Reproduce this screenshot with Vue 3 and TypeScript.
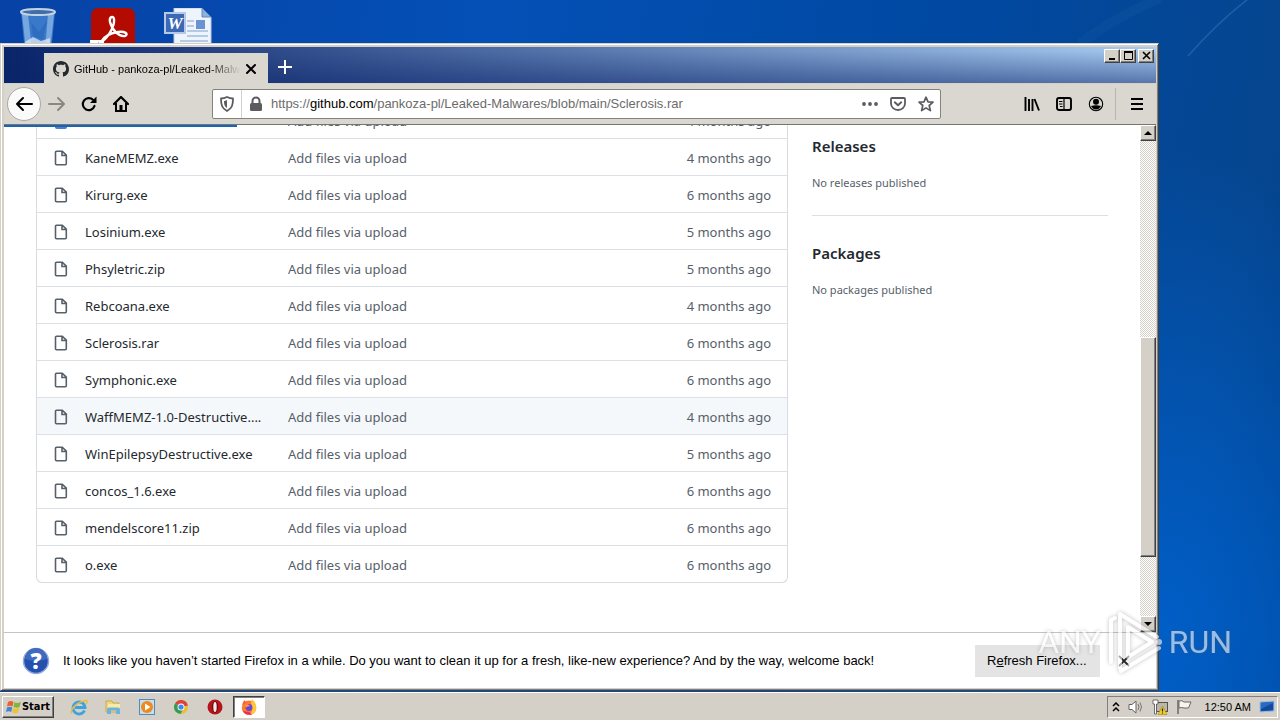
<script setup lang="ts">
interface FileRow {
  name: string
  age: string
  active?: boolean
}

const message = 'Add files via upload'

const files: FileRow[] = [
  { name: 'KaneMEMZ.exe', age: '4 months ago' },
  { name: 'Kirurg.exe', age: '6 months ago' },
  { name: 'Losinium.exe', age: '5 months ago' },
  { name: 'Phsyletric.zip', age: '5 months ago' },
  { name: 'Rebcoana.exe', age: '4 months ago' },
  { name: 'Sclerosis.rar', age: '6 months ago' },
  { name: 'Symphonic.exe', age: '6 months ago' },
  { name: 'WaffMEMZ-1.0-Destructive....', age: '4 months ago', active: true },
  { name: 'WinEpilepsyDestructive.exe', age: '5 months ago' },
  { name: 'concos_1.6.exe', age: '6 months ago' },
  { name: 'mendelscore11.zip', age: '6 months ago' },
  { name: 'o.exe', age: '6 months ago' }
]
</script>

<template>
  <div class="screen">
    <div class="desktop">
      <svg class="streaks" viewBox="0 0 320 180" aria-hidden="true">
        <path d="M288 -1 Q256 24 228 56" fill="none" stroke="#4f8fc4" stroke-opacity=".35" stroke-width="1.5" />
        <path d="M200 -2 Q150 20 120 44" fill="none" stroke="#4f8fc4" stroke-opacity=".08" stroke-width="10" />
      </svg>
      <div class="shortcuts">
        <div class="shortcut">
          <svg width="38" height="48" viewBox="0 0 38 48" aria-label="Recycle Bin">
            <path d="M2 4 L6 44 H32 L36 4 Z" fill="#4c8bd6" fill-opacity=".75" />
            <path d="M3 6 L7 42 H13 L9 6 Z M29 6 L26 42 H31 L35 6Z" fill="#a9cdf0" fill-opacity=".55" />
            <path d="M12 14 L20 24 L28 12 L24 32 L14 28 Z" fill="#1f5db0" fill-opacity=".4" />
            <path d="M6 34 L14 29 L22 33 L31 30 L31 44 H8 Z" fill="#d7e5f2" fill-opacity=".8" />
            <ellipse cx="19" cy="4" rx="17" ry="3" fill="#3f6ea8" stroke="#c3d3e2" stroke-width="2" />
          </svg>
        </div>
        <div class="shortcut">
          <svg width="46" height="48" viewBox="0 0 46 48" aria-label="Acrobat Reader">
            <rect x="1" y="0" width="44" height="46" rx="7" fill="#b30b00" />
            <path d="M11 34 C17 31 25 19 24 11 C23 7 19 9 20 14 C22 22 29 29 35 28 C39 26 35 23 28 24 C21 25 14 28 11 34 Z" fill="none" stroke="#fff" stroke-width="2.4" stroke-linejoin="round" />
            <rect x="0" y="32" width="14" height="14" fill="#fff" />
            <path d="M2 45 V38 H8 V34 L13 40 Z" fill="#1b5aa8" />
          </svg>
        </div>
        <div class="shortcut">
          <svg width="48" height="48" viewBox="0 0 48 48" aria-label="Word document">
            <path d="M10 0 H38 L47 9 V48 H10 Z" fill="#eef4fb" stroke="#b9cbe2" />
            <path d="M38 0 V9 H47 Z" fill="#8fb0db" stroke="#6388bd" />
            <path d="M23 13 H30 M23 18 H30 M23 23 H44 M23 28 H44 M16 33 H44" stroke="#7fa0cf" stroke-width="1" />
            <rect x="32" y="12" width="9" height="9" fill="#6a93cf" />
            <rect x="1" y="5" width="20" height="20" fill="#3c68b5" stroke="#b4c8e8" stroke-width="2" />
            <text x="11" y="21" text-anchor="middle" font-family="Liberation Serif, serif" font-weight="700" font-style="italic" font-size="17" fill="#fff">W</text>
          </svg>
        </div>
      </div>

      <div class="window">
        <header class="titlebar">
          <div class="tab">
            <svg width="16" height="16" viewBox="0 0 16 16" aria-hidden="true">
              <path fill="#24292e" d="M8 0C3.58 0 0 3.58 0 8c0 3.54 2.29 6.53 5.47 7.59.4.07.55-.17.55-.38 0-.19-.01-.82-.01-1.49-2.01.37-2.53-.49-2.69-.94-.09-.23-.48-.94-.82-1.13-.28-.15-.68-.52-.01-.53.63-.01 1.08.58 1.23.82.72 1.21 1.87.87 2.33.66.07-.52.28-.87.51-1.07-1.78-.2-3.64-.89-3.64-3.95 0-.87.31-1.59.82-2.15-.08-.2-.36-1.02.08-2.12 0 0 .67-.21 2.2.82.64-.18 1.32-.27 2-.27s1.36.09 2 .27c1.53-1.04 2.2-.82 2.2-.82.44 1.1.16 1.92.08 2.12.51.56.82 1.27.82 2.15 0 3.07-1.87 3.75-3.65 3.95.29.25.54.73.54 1.48 0 1.07-.01 1.93-.01 2.2 0 .21.15.46.55.38A8.01 8.01 0 0016 8c0-4.42-3.58-8-8-8z" />
            </svg>
            <span class="tab-title">GitHub - pankoza-pl/Leaked-Malwares</span>
            <button class="plain tab-close" aria-label="Close tab">
              <svg width="12" height="12" viewBox="0 0 12 12"><path d="M2 2 L10 10 M10 2 L2 10" stroke="#000" stroke-width="2" stroke-linecap="round" /></svg>
            </button>
          </div>
          <button class="plain new-tab" aria-label="New tab">
            <svg width="14" height="14" viewBox="0 0 14 14"><path d="M7 0 V14 M0 7 H14" stroke="#fff" stroke-width="2" /></svg>
          </button>
          <div class="captions">
            <button class="classic caption" aria-label="Minimize"><svg width="11" height="10" viewBox="0 0 11 10"><path d="M2 8 H8" stroke="#000" stroke-width="2" /></svg></button>
            <button class="classic caption" aria-label="Maximize"><svg width="11" height="10" viewBox="0 0 11 10"><path d="M1.500 1 V8.500 H9.500 V1" fill="none" stroke="#000" /><path d="M1 1 H10" stroke="#000" stroke-width="2" /></svg></button>
            <button class="classic caption close" aria-label="Close"><svg width="11" height="10" viewBox="0 0 11 10"><path d="M2 1 L9 8 M9 1 L2 8" stroke="#000" stroke-width="1.600" /></svg></button>
          </div>
        </header>

        <nav class="toolbar">
          <button class="plain back" aria-label="Back">
            <svg width="18" height="16" viewBox="0 0 18 16"><path d="M17 8 H2 M8 2 L2 8 L8 14" fill="none" stroke="#000" stroke-width="2" stroke-linecap="round" stroke-linejoin="round" /></svg>
          </button>
          <button class="plain tool" aria-label="Forward">
            <svg width="18" height="16" viewBox="0 0 18 16"><path d="M1 8 H16 M10 2 L16 8 L10 14" fill="none" stroke="#8a8884" stroke-width="2" stroke-linecap="round" stroke-linejoin="round" /></svg>
          </button>
          <button class="plain tool" aria-label="Reload">
            <svg width="16" height="16" viewBox="0 0 16 16"><path d="M13.500 10 A6 6 0 1 1 12 3.800" fill="none" stroke="#000" stroke-width="2.200" stroke-linecap="round" /><path d="M15.500 0.500 V7 H9 Z" fill="#000" /></svg>
          </button>
          <button class="plain tool" aria-label="Home">
            <svg width="16" height="16" viewBox="0 0 16 16"><path d="M1 8 L8 1 L15 8" fill="none" stroke="#000" stroke-width="2.200" stroke-linecap="round" stroke-linejoin="round" /><path d="M3 7 V15 H13 V7" fill="none" stroke="#000" stroke-width="2" /><path d="M6.500 9 H9.500 V15 H6.500 Z" fill="#000" /></svg>
          </button>
          <div class="spacer"></div>
          <div class="urlbar">
            <button class="plain shield" aria-label="Tracking protection">
              <svg width="14" height="16" viewBox="0 0 14 16"><path d="M7 1 Q10 2.500 13 2.500 C13 9 12 12.500 7 15 C2 12.500 1 9 1 2.500 Q4 2.500 7 1 Z" fill="none" stroke="#5b5b60" stroke-width="1.800" stroke-linejoin="round" /><path d="M7 4 V12 C4.500 10.500 4 8.500 4 5 Q5.500 5 7 4 Z" fill="#5b5b60" /></svg>
            </button>
            <svg class="lock" width="14" height="16" viewBox="0 0 14 16" aria-hidden="true"><rect x="1" y="7" width="12" height="8" rx="1.500" fill="#5b5b60" /><path d="M3.500 8 V5 A3.500 3.500 0 0 1 10.500 5 V8" fill="none" stroke="#5b5b60" stroke-width="2" /></svg>
            <div class="address" role="textbox" aria-label="Address" tabindex="0">https://<b>github.com</b>/pankoza-pl/Leaked-Malwares/blob/main/Sclerosis.rar</div>
            <button class="plain page-tool" aria-label="Page actions">
              <svg width="16" height="16" viewBox="0 0 16 16"><circle cx="2" cy="8" r="1.900" fill="#5b5b60" /><circle cx="8" cy="8" r="1.900" fill="#5b5b60" /><circle cx="14" cy="8" r="1.900" fill="#5b5b60" /></svg>
            </button>
            <button class="plain page-tool" aria-label="Save to Pocket">
              <svg width="16" height="16" viewBox="0 0 16 16"><path d="M2 2 H14 Q15 2 15 3 V7.500 A7 6.500 0 0 1 1 7.500 V3 Q1 2 2 2 Z" fill="none" stroke="#5b5b60" stroke-width="1.800" /><path d="M4.800 6.300 L8 9.300 L11.200 6.300" fill="none" stroke="#5b5b60" stroke-width="1.900" stroke-linecap="round" stroke-linejoin="round" /></svg>
            </button>
            <button class="plain page-tool" aria-label="Bookmark this page">
              <svg width="16" height="16" viewBox="0 0 16 16"><path d="M8 1.200 L10 5.800 L15 6.200 L11.200 9.500 L12.400 14.600 L8 11.900 L3.600 14.600 L4.800 9.500 L1 6.200 L6 5.800 Z" fill="none" stroke="#5b5b60" stroke-width="1.700" stroke-linejoin="round" /></svg>
            </button>
          </div>
          <div class="spacer"></div>
          <button class="plain tool" aria-label="Library">
            <svg width="16" height="16" viewBox="0 0 16 16"><path d="M1.500 1 V15 M5 3 V15 M8.500 3 V15 M10.500 3 L15 14.500" fill="none" stroke="#000" stroke-width="1.900" /></svg>
          </button>
          <button class="plain tool" aria-label="Sidebars">
            <svg width="16" height="16" viewBox="0 0 16 16"><rect x="1" y="2" width="14" height="12" rx="2" fill="none" stroke="#000" stroke-width="1.900" /><path d="M8 2 V14 M3 5.500 H6.500 M3 8 H6.500 M4 10.500 H6.500" stroke="#000" stroke-width="1.200" /></svg>
          </button>
          <button class="plain tool" aria-label="Account">
            <svg width="16" height="16" viewBox="0 0 16 16"><circle cx="8" cy="8" r="6.700" fill="none" stroke="#000" stroke-width="1.100" /><circle cx="8" cy="5.800" r="3" fill="#000" /><path d="M3 10 Q8 8.500 13 10 Q11 13.500 8 13.500 Q5 13.500 3 10 Z" fill="#000" /></svg>
          </button>
          <span class="divider"></span>
          <button class="plain tool menu" aria-label="Open menu">
            <svg width="14" height="14" viewBox="0 0 14 14"><path d="M1 2 H13 M1 7 H13 M1 12 H13" stroke="#000" stroke-width="2" /></svg>
          </button>
        </nav>

        <div class="viewport">
          <div class="load-bar"></div>
          <main class="page">
            <div class="files">
              <table>
                <colgroup><col class="c-icon"><col class="c-name"><col><col class="c-age"></colgroup>
                <tbody>
                  <tr>
                    <td class="icon"><svg width="16" height="16" viewBox="0 0 16 16"><path fill="#4a7fd0" d="M3.750 1A1.750 1.750 0 002 2.750v11.500C2 15.216 2.784 16 3.750 16h8.500A1.750 1.750 0 0014 14.250v-9.500A1.750 1.750 0 0012.250 3h-4.500l-1-1.300A1.750 1.750 0 005.300 1H3.750z" /></svg></td>
                    <td></td>
                    <td class="msg"><a href="#">{{ message }}</a></td>
                    <td class="age">4 months ago</td>
                  </tr>
                  <tr v-for="file in files" :key="file.name" :class="{ active: file.active }">
                    <td class="icon">
                      <svg width="16" height="16" viewBox="0 0 16 16" aria-hidden="true"><path d="M3.500 1.200 H9.300 L13.300 5.200 V13.800 Q13.300 14.800 12.300 14.800 H3.500 Q2.500 14.800 2.500 13.800 V2.200 Q2.500 1.200 3.500 1.200 Z M9 1.500 V5.500 H13" fill="none" stroke="#57606a" stroke-width="1.600" /></svg>
                    </td>
                    <td class="name"><a href="#">{{ file.name }}</a></td>
                    <td class="msg"><a href="#">{{ message }}</a></td>
                    <td class="age">{{ file.age }}</td>
                  </tr>
                </tbody>
              </table>
            </div>
            <aside class="about">
              <section>
                <h2>Releases</h2>
                <p>No releases published</p>
              </section>
              <section>
                <h2>Packages</h2>
                <p>No packages published</p>
              </section>
            </aside>
          </main>
          <div class="scrollbar">
            <button class="classic arrow" aria-label="Scroll up"><svg width="8" height="4" viewBox="0 0 8 4"><path d="M0 4 L4 0 L8 4 Z" /></svg></button>
            <div class="track-before"></div>
            <div class="classic thumb"></div>
            <div class="track-after"></div>
            <button class="classic arrow" aria-label="Scroll down"><svg width="8" height="4" viewBox="0 0 8 4"><path d="M0 0 L4 4 L8 0 Z" /></svg></button>
          </div>
        </div>

        <div class="notice">
          <svg width="28" height="28" viewBox="0 0 28 28" aria-hidden="true">
            <circle cx="14" cy="14" r="12.500" fill="#2450ae" stroke="#8fabdc" stroke-width="1.500" />
            <path d="M3 12 A11 11 0 0 1 25 12 Q14 16 3 12 Z" fill="#3f6ac0" />
            <text x="14" y="22" text-anchor="middle" font-family="Open Sans, sans-serif" font-weight="800" font-size="22" fill="#fff">?</text>
          </svg>
          <p>It looks like you haven’t started Firefox in a while. Do you want to clean it up for a fresh, like-new experience? And by the way, welcome back!</p>
          <button class="refresh">R<u>e</u>fresh Firefox...</button>
          <button class="plain dismiss" aria-label="Dismiss">
            <svg width="12" height="12" viewBox="0 0 12 12"><path d="M1 1 L11 11 M11 1 L1 11" stroke="#222" stroke-width="1.800" /></svg>
          </button>
        </div>
      </div>
    </div>

    <footer class="taskbar">
      <button class="classic start">
        <svg width="16" height="16" viewBox="0 0 16 16" aria-hidden="true">
          <path d="M2 3 Q5 1 7.500 3 L6.500 7.500 Q4 6 1 7.500 Z" fill="#e8622a" />
          <path d="M8.500 3.200 Q11 4.800 15 3 L13.500 8 Q11 9.500 7.500 7.800 Z" fill="#7db83a" />
          <path d="M1 8.500 Q4 7 6.300 8.500 L5.200 13 Q3 11.500 0 13 Z" fill="#3f86d6" />
          <path d="M7.300 8.800 Q10 10.500 13.300 9 L12 13.500 Q9 15 6.200 13.400 Z" fill="#f5c02c" />
        </svg>
        Start
      </button>
      <div class="pins">
        <button class="plain pin" aria-label="Internet Explorer">
          <svg width="18" height="18" viewBox="0 0 18 18"><path d="M14.500 12.500 A6 6 0 1 1 15 9.500 H5" fill="none" stroke="#3ba3e0" stroke-width="2.800" /><path d="M2 15.500 C-1 13 6 4 16 2.500 C18 2.500 17 5 16 6" fill="none" stroke="#e8bd3c" stroke-width="1.500" /></svg>
        </button>
        <button class="plain pin" aria-label="Explorer">
          <svg width="18" height="18" viewBox="0 0 18 18"><path d="M2 3 H8 L9 5 H15 V14 H2 Z" fill="#efd67c" stroke="#c9a94e" /><path d="M4 6 H16 V12 H4Z" fill="#f9eaa8" /><path d="M3 16 V11 Q3 9.500 5 9.500 H14 Q16 9.500 16 11 V16 H12 V12.500 H7 V16 Z" fill="#6db4dd" /></svg>
        </button>
        <button class="plain pin" aria-label="Media Player">
          <svg width="18" height="18" viewBox="0 0 18 18"><rect x="1.500" y="1.500" width="15" height="15" fill="#c4dff3" stroke="#5689b5" /><circle cx="9" cy="9" r="6" fill="#ee8a1c" /><path d="M7 5.500 L12.500 9 L7 12.500 Z" fill="#fff" /></svg>
        </button>
        <button class="plain pin" aria-label="Chrome">
          <svg width="16" height="16" viewBox="0 0 16 16"><circle cx="8" cy="8" r="7" fill="#e9c02e" /><path d="M8 8 L2 4.400 A7 7 0 0 1 14.900 6.500 Z" fill="#dc4437" /><path d="M8 8 L2 4.400 A7 7 0 0 0 7.500 15 L10 10 Z" fill="#2f9e54" /><circle cx="8" cy="8" r="3.500" fill="#fff" /><circle cx="8" cy="8" r="2.600" fill="#4285f4" /></svg>
        </button>
        <button class="plain pin" aria-label="Opera">
          <svg width="16" height="16" viewBox="0 0 16 16"><circle cx="8" cy="8" r="7.500" fill="#b3151b" /><ellipse cx="8" cy="8" rx="3" ry="5.800" fill="#6c070b" /><ellipse cx="8" cy="8" rx="1.700" ry="5" fill="#f4eaea" /></svg>
        </button>
        <button class="plain pin running" aria-label="Firefox">
          <svg width="18" height="18" viewBox="0 0 18 18"><circle cx="9" cy="9.800" r="7.200" fill="#ff7a2c" /><path d="M12 1 Q17 5 16.200 11 Q15 16 10 17 Q14 12 11 6 Z" fill="#ffc83a" /><path d="M2 7 Q3 3 5 2 L6 5 Z" fill="#ff5a3c" /><path d="M3 13 Q6 18 12 16.500 L9 14 Z" fill="#e92f55" /><circle cx="9" cy="9.500" r="3.400" fill="#6a45d6" /><path d="M5 7 Q8 5 10 8 Q7 8 6 9.500Z" fill="#ff9a35" /></svg>
        </button>
      </div>
      <div class="tray">
        <button class="plain" aria-label="Show hidden icons"><svg width="8" height="10" viewBox="0 0 8 10"><path d="M1 4 L4 1 L7 4 M1 9 L4 6 L7 9" fill="none" stroke="#000" stroke-width="1.500" /></svg></button>
        <button class="plain" aria-label="Volume"><svg width="16" height="16" viewBox="0 0 16 16"><path d="M1 5.500 H4 L8 2 V14 L4 10.500 H1 Z" fill="#fff" stroke="#66635e" /><path d="M10 5 Q12 8 10 11 M12 3.500 Q15 8 12 12.500" fill="none" stroke="#77746e" /></svg></button>
        <button class="plain" aria-label="Network"><svg width="16" height="16" viewBox="0 0 16 16"><rect x="4.500" y="3.500" width="11" height="9" fill="#b9b6ae" stroke="#55524c" /><path d="M1 1 H6 V5 H4.500 V15 H2.500 V5 H1 Z" fill="#fff" stroke="#55524c" stroke-width=".8" /><path d="M10.500 7 L15 15.500 H6 Z" fill="#f7cf1f" stroke="#a8860b" stroke-width=".6" /><path d="M10.500 9.500 V12.500 M10.500 13.500 V14.600" stroke="#222" stroke-width="1.200" /></svg></button>
        <button class="plain" aria-label="Action Center"><svg width="16" height="16" viewBox="0 0 16 16"><path d="M2 1 V15" stroke="#6b6862" stroke-width="1.500" /><path d="M3 2 Q6 1 8 3 H15 L12.500 9 H8 Q6 8 3 9 Z" fill="#f6f5f2" stroke="#6b6862" /></svg></button>
        <time>12:50 AM</time>
        <button class="plain" aria-label="Show desktop"><svg width="16" height="14" viewBox="0 0 16 14"><path d="M1 2 L15 1 V11 L1 12 Z" fill="#2a6ac0" stroke="#9dbce6" /><path d="M2 9 L14 3 V10 L2 11 Z" fill="#114a9c" /></svg></button>
      </div>
    </footer>

    <div class="watermark">
      <span>ANY</span>
      <svg width="56" height="64" viewBox="0 0 56 64" aria-hidden="true">
        <path d="M4 52 V10 L8 8 M13 58 V4 L50 27 M21 17 V47 L45 32 Z M14 61 L52 38" fill="none" stroke="#fff" stroke-width="4" stroke-linejoin="round" stroke-linecap="round" />
        <circle cx="52" cy="32" r="3" fill="#fff" />
      </svg>
      <span>RUN</span>
    </div>
  </div>
</template>

<style>
body {
  margin: 0;
}
</style>

<style scoped>
.screen {
  position: relative;
  display: flex;
  flex-direction: column;
  height: 100vh;
  overflow: hidden;
  font: 13px/16px "Liberation Sans", Arial, sans-serif;
  color: #000;
}
.screen * {
  box-sizing: border-box;
}
svg {
  display: block;
  flex: none;
}
p, h2 {
  margin: 0;
}
a {
  color: inherit;
  text-decoration: none;
}
button {
  font: inherit;
  color: inherit;
  border: 0;
  padding: 0;
  border-radius: 0;
}
.plain {
  display: flex;
  align-items: center;
  justify-content: center;
  background: none;
}
.classic {
  display: flex;
  align-items: center;
  justify-content: center;
  background: #d4d0c8;
  border: 1px solid;
  border-color: #fff #404040 #404040 #fff;
  box-shadow: inset -1px -1px #808080;
}

.desktop {
  position: relative;
  flex: 1;
  min-height: 0;
  background:
    radial-gradient(ellipse 30% 70% at 90% 92%, #005fc9, rgba(0, 88, 188, 0) 100%),
    linear-gradient(100deg, #0742a6 0%, #0450b6 35%, #0048a0 70%, #064690 92%, #003d84 100%);
}
.streaks {
  position: absolute;
  top: 0;
  right: 0;
  width: 25%;
}
.shortcuts {
  display: flex;
  padding-top: 8px;
}
.shortcut {
  display: flex;
  justify-content: center;
  width: 75px;
}

.window {
  position: absolute;
  inset: 43px 121px 1px 0;
  display: flex;
  flex-direction: column;
  padding: 3px 2px 2px 3px;
  background: #d4d0c8;
  border: 1px solid;
  border-color: #d4d0c8 #404040 #404040 #d4d0c8;
  box-shadow: inset 1px 1px #fff, inset -1px -1px #808080;
}
.titlebar {
  display: flex;
  height: 37px;
  align-items: flex-end;
  border-bottom: 1px solid #d4d0c8;
  background:
    linear-gradient(rgba(10, 36, 106, 0) 10%, rgba(10, 36, 106, .5)),
    linear-gradient(90deg, #0a246a, #a6caf0);
}
.tab {
  display: flex;
  align-items: center;
  width: 224px;
  height: 31px;
  margin: 0 0 -1px 40px;
  padding: 0 9px;
  background: #dad7d0;
}
.tab-title {
  flex: 1;
  min-width: 0;
  margin: 0 2px 0 5px;
  overflow: hidden;
  white-space: nowrap;
  font-size: 11px;
  mask-image: linear-gradient(90deg, #000 80%, transparent);
}
.tab-close {
  width: 16px;
  height: 16px;
}
.new-tab {
  width: 34px;
  height: 32px;
}
.captions {
  display: flex;
  align-self: flex-start;
  margin: 2px 2px 0 auto;
}
.caption {
  width: 16px;
  height: 14px;
}
.caption.close {
  margin-left: 2px;
}

.toolbar {
  display: flex;
  align-items: center;
  height: 41px;
  padding: 0 3px;
  background: #dad7d0;
  border-bottom: 1px solid #77756f;
}
.back {
  width: 34px;
  height: 34px;
  border: 1px solid #aaa8a2;
  border-radius: 50%;
  background: #fafafa;
}
.tool {
  width: 32px;
  height: 32px;
}
.spacer {
  flex: 75;
}
.urlbar {
  flex: 728;
  min-width: 0;
  display: flex;
  align-items: center;
  height: 30px;
  background: #fff;
  border: 1px solid #85837d;
  border-radius: 2px;
}
.shield {
  width: 29px;
  height: 28px;
  border-right: 1px solid #d0d0d0;
}
.lock {
  margin: 0 8px 0 7px;
}
.address {
  flex: 1;
  min-width: 0;
  overflow: hidden;
  white-space: nowrap;
  color: #6c6c6c;
}
.address b {
  font-weight: 400;
  color: #000;
}
.page-tool {
  width: 28px;
  height: 28px;
}
.divider {
  width: 1px;
  height: 32px;
  margin: 0 5px 0 3px;
  background: #b8b5ae;
}

.viewport {
  position: relative;
  flex: 1;
  min-height: 0;
  display: flex;
  overflow: hidden;
  background: #fff;
}
.load-bar {
  position: absolute;
  top: 0;
  left: 0;
  width: 233px;
  height: 2px;
  background: #1765b8;
}
.page {
  flex: 1;
  min-width: 0;
  display: flex;
  align-items: flex-start;
  gap: 24px;
  padding: 0 32px;
  font-family: "Noto Sans", "Open Sans", sans-serif;
  overflow: hidden;
}
.files {
  flex: 1;
  min-width: 0;
  margin-top: -24px;
  border: 1px solid #d8dbdf;
  border-top: 0;
  border-radius: 0 0 6px 6px;
  overflow: hidden;
}
table {
  width: 100%;
  table-layout: fixed;
  border-spacing: 0;
}
.c-icon {
  width: 48px;
}
.c-name {
  width: 203px;
}
.c-age {
  width: 150px;
}
td {
  height: 37px;
  padding: 2px 0 0;
  border-top: 1px solid #dcdfe3;
  line-height: 20px;
  white-space: nowrap;
  overflow: hidden;
  color: #57606a;
}
td.icon {
  padding-left: 16px;
}
td.name {
  color: #24292f;
}
td.age {
  padding-right: 16px;
  text-align: right;
}
tr.active td {
  background: #f5f8fb;
}
.about {
  width: 296px;
}
.about section {
  padding: 10px 0 24px;
}
.about section + section {
  padding-top: 26px;
  border-top: 1px solid #dcdfe3;
}
h2 {
  font-size: 15px;
  line-height: 22px;
  font-weight: 600;
  color: #24292f;
}
.about p {
  margin-top: 18px;
  font-size: 11px;
  line-height: 16px;
  color: #57606a;
}

.scrollbar {
  display: flex;
  flex-direction: column;
  width: 16px;
  background: repeating-conic-gradient(#d4d0c8 0 25%, #fff 0 50%) 0 0 / 2px 2px;
}
.arrow {
  width: 16px;
  height: 16px;
}
.track-before {
  flex: 197;
}
.thumb {
  flex: 220;
}
.track-after {
  flex: 59;
}

.notice {
  display: flex;
  align-items: center;
  height: 56px;
  padding: 1px 22px 0 18px;
  background: #fff;
  border-top: 1px solid #c4c4c4;
}
.notice p {
  flex: 1;
  min-width: 0;
  margin-left: 13px;
}
.refresh {
  width: 125px;
  height: 32px;
  padding-left: 12px;
  text-align: left;
  background: #e4e4e4;
}
.dismiss {
  width: 20px;
  height: 20px;
  margin-left: 14px;
}

.taskbar {
  display: flex;
  align-items: center;
  height: 28px;
  padding: 1px 2px 0;
  background: #d4d0c8;
  border-top: 1px solid #fff;
}
.start {
  width: 52px;
  height: 22px;
  font: bold 11px/16px "DejaVu Sans Condensed", "DejaVu Sans", sans-serif;
}
.pins {
  display: flex;
  gap: 1px;
  margin-left: 9px;
}
.pin {
  width: 33px;
  height: 22px;
}
.pin:not(.running) {
  padding-right: 1px;
}
.running {
  width: 32px;
  background: #fff;
  border: 1px solid;
  border-color: #404040 #fff #fff #404040;
  box-shadow: inset 1px 1px #808080;
}
.tray {
  display: flex;
  align-items: center;
  gap: 8px;
  height: 22px;
  margin-left: auto;
  padding: 0 2px 0 4px;
  border: 1px solid;
  border-color: #808080 #fff #fff #808080;
}
time {
  margin: 0 0 0 5px;
  font-size: 11px;
}

.watermark {
  position: absolute;
  right: 48px;
  bottom: 46px;
  display: flex;
  align-items: center;
  gap: 6px;
  color: #fff;
  font: 400 32px/40px Roboto, sans-serif;
  opacity: .6;
  filter: drop-shadow(0 0 2px rgba(80, 80, 80, .6));
  pointer-events: none;
}
</style>
